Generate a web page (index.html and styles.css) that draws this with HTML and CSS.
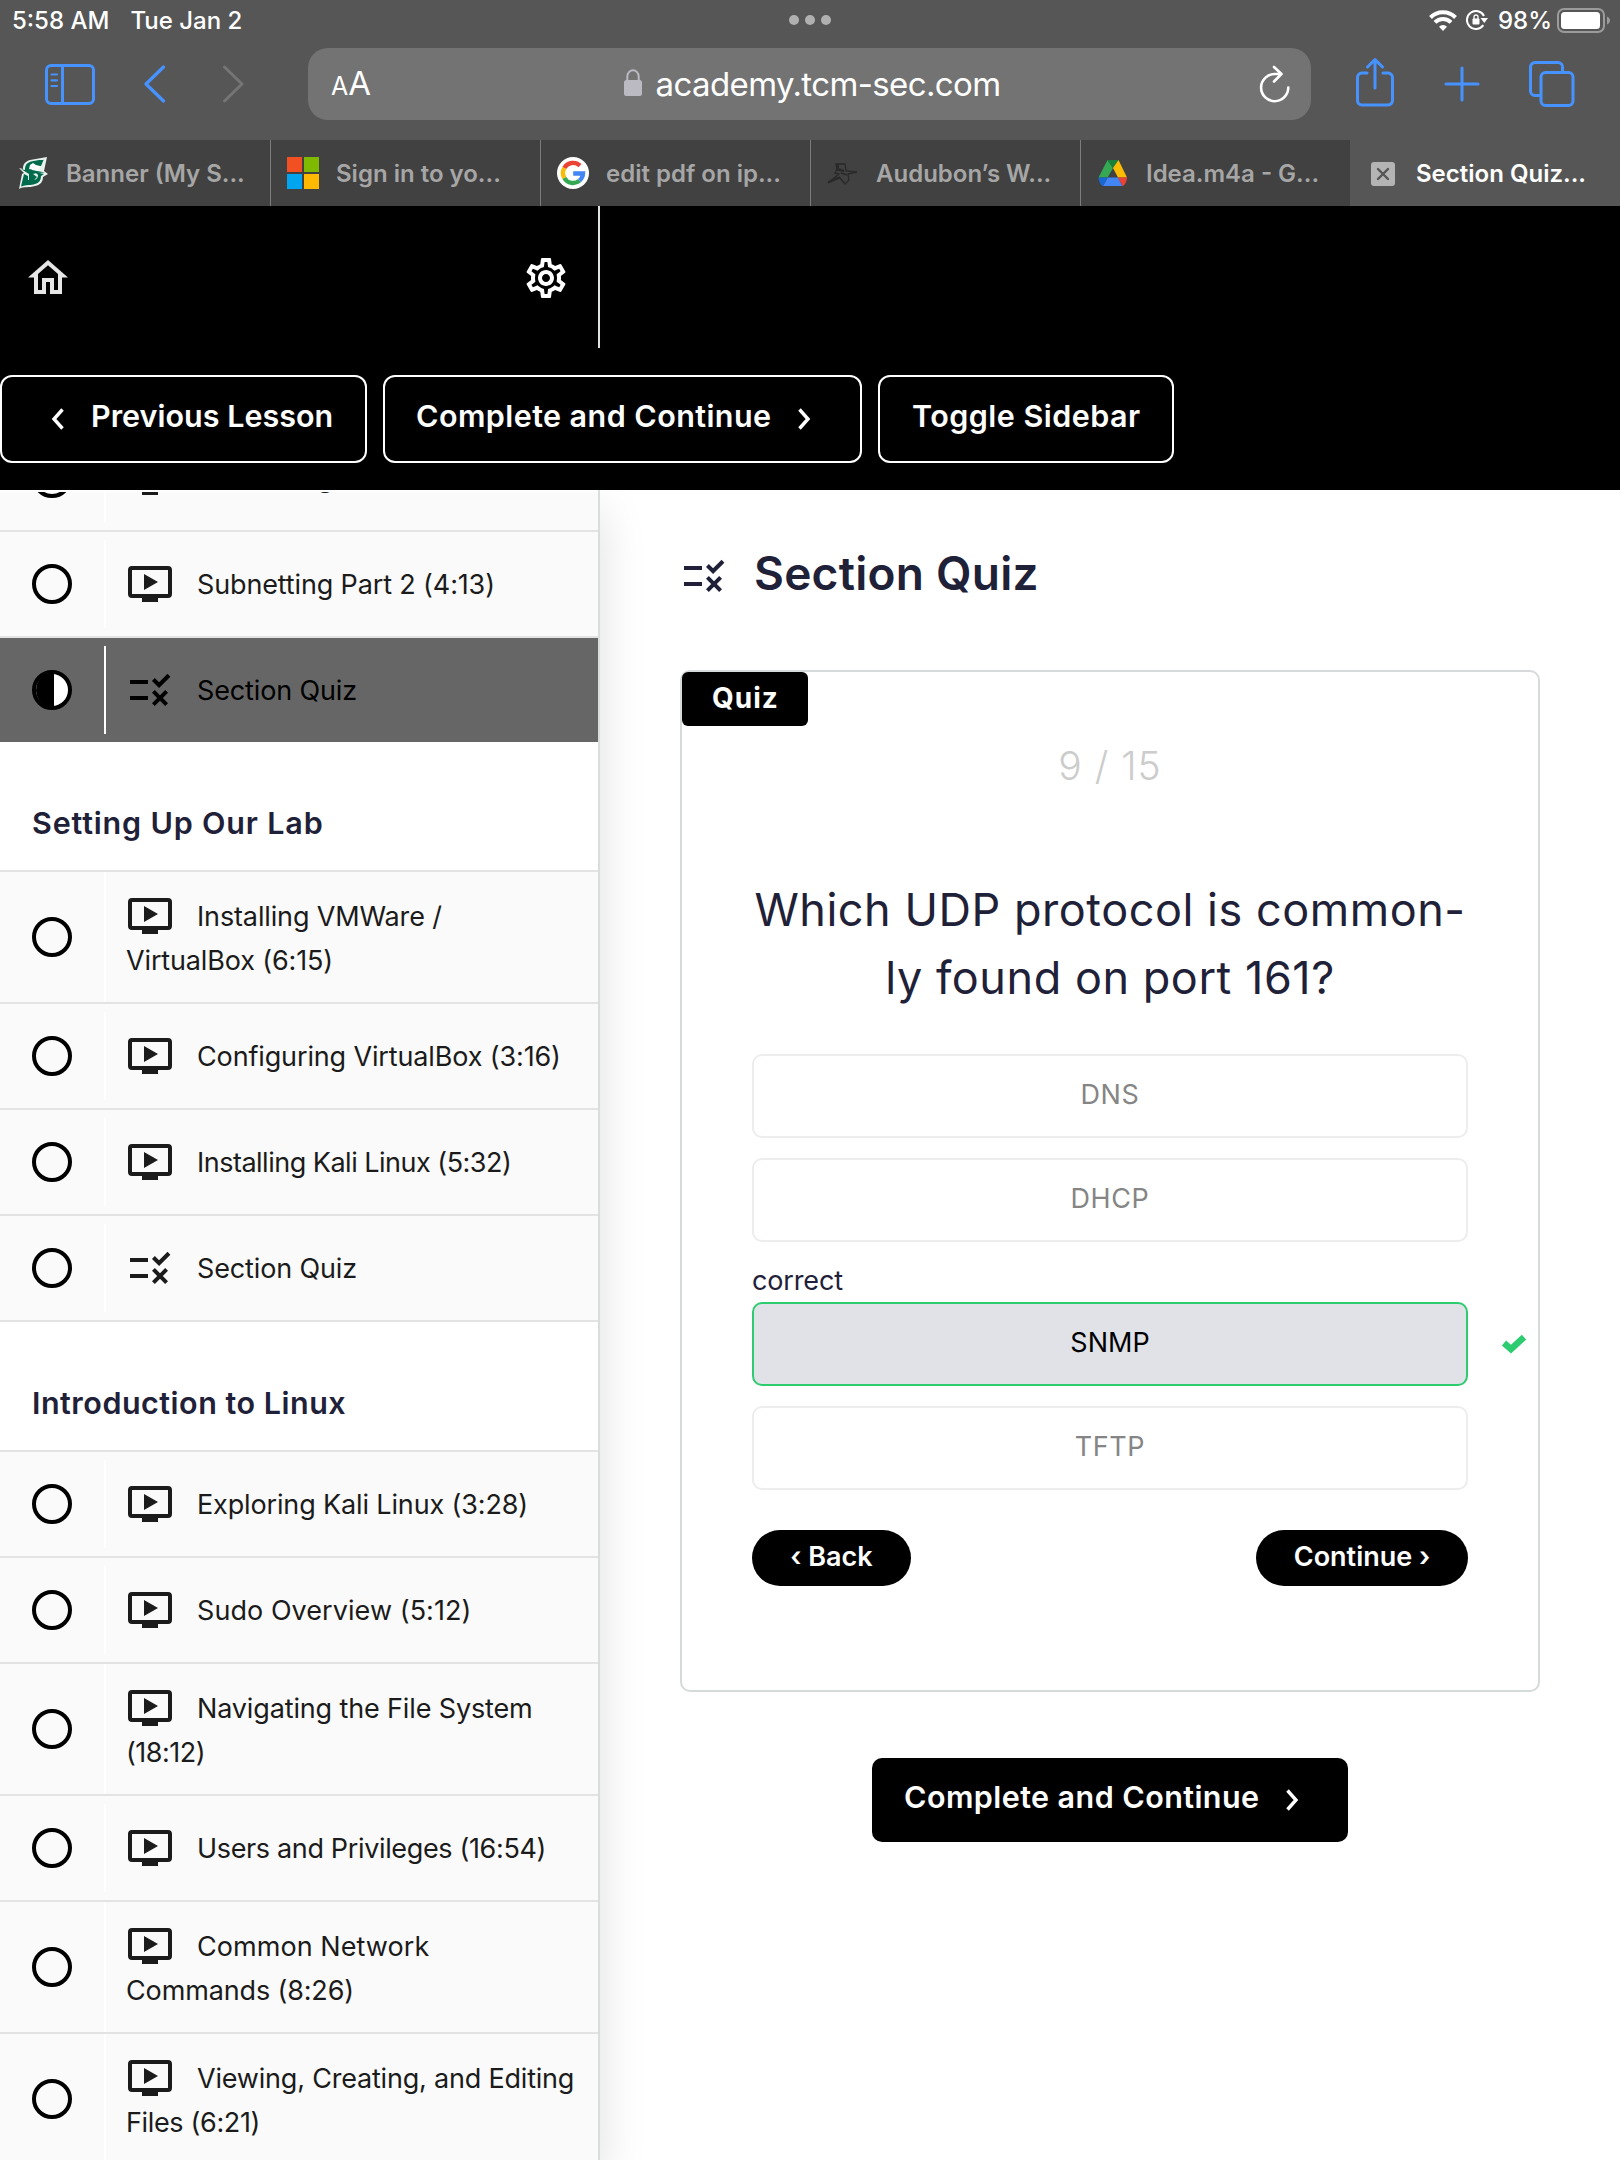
FILE: index.html
```html
<!DOCTYPE html>
<html lang="en">
<head>
<meta charset="utf-8">
<title>Section Quiz</title>
<link rel="stylesheet" href="styles.css">
</head>
<body>
<svg class="defs" aria-hidden="true">
  <symbol id="video" viewBox="0 0 46 36">
    <rect x="3" y="2" width="40" height="28" rx="2" fill="none" stroke="currentColor" stroke-width="4"/>
    <path d="M15 31h16v5H15zM17 8l14 8-14 8z" fill="currentColor"/>
  </symbol>
  <symbol id="rule" viewBox="0 3 24 18">
    <path fill="currentColor" d="M16.54 11L13 7.46l1.41-1.41 2.12 2.12 4.24-4.24 1.41 1.41L16.54 11zM11 7H2v2h9V7zm10 6.41L19.59 12 17 14.59 14.41 12 13 13.41 15.59 16 13 18.59 14.41 20 17 17.41 19.59 20 21 18.59 18.41 16 21 13.41zM11 15H2v2h9v-2z"/>
  </symbol>
  <symbol id="ring" viewBox="0 0 40 40"><circle cx="20" cy="20" r="18" fill="none" stroke="#000" stroke-width="4"/></symbol>
  <symbol id="left" viewBox="0 0 14 22"><path d="M11.5 1.5L3 11l8.500 9.500" fill="none" stroke="currentColor" stroke-width="3.400"/></symbol>
  <symbol id="right" viewBox="0 0 14 22"><path d="M2.500 1.500L11 11l-8.500 9.500" fill="none" stroke="currentColor" stroke-width="3.400"/></symbol>
</svg>

<header class="browser">
  <div class="status">
    <div class="status-left"><span>5:58 AM</span><span>Tue Jan 2</span></div>
    <div class="dots"><i></i><i></i><i></i></div>
    <div class="status-right">
      <svg width="28" height="21" viewBox="0 0 28 21" fill="none" stroke="#fff" stroke-width="4"><path d="M1.500 7.500a17.700 17.700 0 0 1 25 0"/><path d="M6 12.300a11.300 11.300 0 0 1 16 0"/><path d="M14 21l-4-4.200a5.600 5.600 0 0 1 8 0z" fill="#fff" stroke="none"/></svg>
      <svg class="lock-rot" width="22" height="20" viewBox="0 0 22 20"><path d="M18 6A9 9 0 1 0 17.300 15.200" fill="none" stroke="#fff" stroke-width="2"/><path d="M14.500 8h7.500l-3.700 5z" fill="#fff"/><rect x="6.500" y="8.500" width="7" height="6" rx="1" fill="#fff"/><path d="M8 9V7a2 2 0 0 1 4 0v2" fill="none" stroke="#fff" stroke-width="1.300"/></svg>
      <span>98%</span>
      <svg class="battery" width="54" height="25" viewBox="0 0 54 25"><rect x="1" y="1" width="46" height="23" rx="6" fill="none" stroke="#9b9b9b" stroke-width="2"/><rect x="4" y="4" width="39" height="17" rx="3.500" fill="#fff"/><path d="M50 8.500c4 1.500 4 6.500 0 8z" fill="#9b9b9b"/></svg>
    </div>
  </div>
  <div class="toolbar">
    <svg class="t-side" width="50" height="41" viewBox="0 0 50 41" fill="none" stroke="#4693ff" stroke-width="3"><rect x="1.500" y="1.500" width="47" height="38" rx="4.500"/><path d="M17.500 2v37"/><path d="M6.500 10.500H12M6.500 16.300H12M6.500 22H12" stroke-width="2.200" stroke-linecap="round"/></svg>
    <svg class="t-back" width="22" height="38" viewBox="0 0 22 38" fill="none" stroke="#4693ff" stroke-width="3.200" stroke-linecap="round" stroke-linejoin="round"><path d="M19.500 2L2 19l17.500 17"/></svg>
    <svg class="t-fwd" width="22" height="38" viewBox="0 0 22 38" fill="none" stroke="#757575" stroke-width="3" stroke-linecap="round" stroke-linejoin="round"><path d="M2.500 2L20 19 2.500 36"/></svg>
    <div class="url">
      <span class="aa"><small>A</small>A</span>
      <div class="host">
        <svg width="18" height="27" viewBox="0 0 18 27"><rect y="11" width="18" height="16" rx="2.500" fill="#bbb9c2"/><path d="M3.300 12V7.500a5.700 6.200 0 0 1 11.400 0V12" fill="none" stroke="#bbb9c2" stroke-width="2"/></svg>
        <span>academy.tcm-sec.com</span>
      </div>
      <svg class="reload" width="32" height="38" viewBox="0 0 32 38" fill="none" stroke="#fff" stroke-width="2.600" stroke-linecap="round" stroke-linejoin="round"><path d="M29.300 22.500A13.600 13.600 0 1 1 16 9h6.500M15 2l7.500 7-7.500 7.500"/></svg>
    </div>
    <svg class="t-share" width="38" height="50" viewBox="0 0 38 50" fill="none" stroke="#4693ff" stroke-width="3" stroke-linecap="round" stroke-linejoin="round"><path d="M11 16H6a4.500 4.500 0 0 0-4.500 4.500v23A4.500 4.500 0 0 0 6 48h26a4.500 4.500 0 0 0 4.500-4.500v-23A4.500 4.500 0 0 0 32 16h-5M19 31V2.500M11.500 10L19 2.500l7.500 7.500"/></svg>
    <svg class="t-plus" width="36" height="36" viewBox="0 0 36 36" fill="none" stroke="#4693ff" stroke-width="3" stroke-linecap="round"><path d="M18 2v32M2 18h32"/></svg>
    <svg class="t-tabs" width="46" height="46" viewBox="0 0 46 46" fill="none" stroke="#4693ff" stroke-width="3"><rect x="12" y="11.500" width="32" height="33" rx="4.500"/><path d="M12 34.500H6A4.500 4.500 0 0 1 1.500 30V6A4.500 4.500 0 0 1 6 1.500h23A4.500 4.500 0 0 1 33.500 6v5.500"/></svg>
  </div>
  <nav class="tabs">
    <div class="tab"><svg viewBox="0 0 32 32"><path d="M30 0L13 3C7 5 6 8 6 12l-4-1 5 5-2 1-3 15c5-3 10-1 16-3 6-1 8-5 8-9l5-3-4-3c1-5 2-9 3-14z" fill="#e9f1ed"/><path d="M27.500 2L14 4.500C9 6 8 9 8 13l-4-1 8 5v7h4l4-4-4-3 4-1 8-.5-13-2.500 1-4h8l3-7zM7 17l-3 12.500c5-2 10-1 14-2.500 4-1 6-4 6-8l3-2-9-2 3 3c0 4-3 5-5 5h-5v-4z" fill="#006b4c"/><path d="M13 8l3-2 3 2 4 1-1 5-10-2z" fill="#fff"/></svg><span>Banner (My S...</span></div>
    <div class="tab"><svg viewBox="0 0 32 32"><path fill="#f25022" d="M0 0h15v15H0z"/><path fill="#7fba00" d="M17 0h15v15H17z"/><path fill="#00a4ef" d="M0 17h15v15H0z"/><path fill="#ffb900" d="M17 17h15v15H17z"/></svg><span>Sign in to yo...</span></div>
    <div class="tab"><svg viewBox="0 0 32 32"><circle cx="16" cy="16" r="16" fill="#fff"/><g fill="none" stroke-width="4.400"><path d="M23 8.700A10 10 0 0 0 7.300 11" stroke="#ea4335"/><path d="M7.300 11a10 10 0 0 0 0 10" stroke="#fbbc05"/><path d="M7.300 21a10 10 0 0 0 15.200 2.600" stroke="#34a853"/><path d="M22.500 23.600A10 10 0 0 0 26 16.500H16.200" stroke="#4285f4"/></g></svg><span>edit pdf on ip...</span></div>
    <div class="tab"><svg viewBox="0 0 32 32" fill="none" stroke="#292929" stroke-width="1.300"><path d="M9 7h9l1 7 11 1-9 2 1 6-4 4-5-6-12 5 11-9-4-1 2-4z"/><path d="M12 12l5 2M1 25l12-5M14 16l6 2M11 8v5l6 1" stroke-width="1.800"/></svg><span>Audubon’s W...</span></div>
    <div class="tab"><svg viewBox="0 0 32 32"><path d="M10.500 3L1.500 20.500h9.200L16 11z" fill="#34a853"/><path d="M10.500 3h11L16 11z" fill="#188038"/><path d="M21.500 3l8.500 17.500h-9L16 11z" fill="#fbbc04"/><path d="M10.700 20.500H21l4.500 8.500H6z" fill="#4285f4"/><path d="M1.500 20.500h9.200L6 29c-2 0-4.500-5-4.500-8.500z" fill="#1967d2"/><path d="M30 20.500h-9l4.500 8.500c2 0 4.500-5 4.500-8.500z" fill="#ea4335"/></svg><span>Idea.m4a - G...</span></div>
    <div class="tab active"><svg viewBox="0 0 32 32"><rect x="4" y="5" width="24" height="24" rx="3" fill="#b4b4b4"/><path d="M11 12l10 10M21 12L11 22" stroke="#555" stroke-width="2.400" stroke-linecap="round"/></svg><span>Section Quiz...</span></div>
  </nav>
</header>

<header class="lesson-bar">
  <div class="course-tools">
    <svg width="40" height="34" viewBox="0 0 40 34"><path fill="#e6e6e6" fill-rule="evenodd" d="M20 0l20 17.500h-6V34H22V22h-4v12H6V17.500H0zM20 5.300L10 14v16h4V18h12v12h4V14z"/></svg>
    <svg width="48" height="48" viewBox="0 0 24 24"><path fill="#fff" d="M19.430 12.980c.04-.32.07-.64.07-.98s-.03-.66-.07-.98l2.110-1.650c.19-.15.24-.42.12-.64l-2-3.460c-.09-.16-.26-.25-.44-.25-.06 0-.12.010-.17.030l-2.490 1c-.52-.4-1.080-.73-1.690-.98l-.38-2.650C14.460 2.180 14.250 2 14 2h-4c-.25 0-.46.180-.49.420l-.38 2.650c-.61.250-1.170.590-1.690.980l-2.490-1c-.06-.02-.12-.03-.18-.03-.17 0-.34.090-.43.250l-2 3.460c-.13.220-.07.490.120.640l2.110 1.650c-.04.320-.07.650-.07.980s.03.660.070.980l-2.110 1.650c-.19.150-.24.420-.12.640l2 3.460c.09.160.260.250.440.250.06 0 .12-.01.170-.03l2.490-1c.52.4 1.080.730 1.690.980l.38 2.650c.03.240.240.420.490.420h4c.25 0 .46-.18.490-.42l.38-2.650c.61-.25 1.170-.59 1.690-.98l2.490 1c.06.020.120.030.180.030.17 0 .34-.09.430-.25l2-3.460c.12-.22.070-.49-.12-.64l-2.110-1.650zm-1.980-1.710c.04.310.050.520.050.730 0 .21-.02.430-.05.730l-.14 1.130.89.700 1.080.840-.7 1.210-1.270-.51-1.040-.42-.9.680c-.43.320-.84.560-1.250.730l-1.060.43-.16 1.130-.2 1.350h-1.400l-.19-1.350-.16-1.130-1.060-.43c-.43-.18-.83-.41-1.230-.71l-.91-.7-1.060.43-1.270.51-.7-1.210 1.080-.84.89-.7-.14-1.130c-.03-.31-.05-.54-.05-.74s.02-.43.050-.73l.14-1.130-.89-.7-1.080-.84.7-1.210 1.270.51 1.040.42.9-.68c.43-.32.84-.56 1.250-.73l1.060-.43.160-1.130.2-1.350h1.390l.19 1.350.16 1.130 1.060.43c.43.180.830.410 1.230.710l.91.7 1.060-.43 1.270-.51.7 1.210-1.070.85-.89.700.14 1.130zM12 8c-2.210 0-4 1.790-4 4s1.790 4 4 4 4-1.790 4-4-1.790-4-4-4zm0 6c-1.100 0-2-.9-2-2s.9-2 2-2 2 .9 2 2-.9 2-2 2z"/></svg>
  </div>
  <div class="lesson-nav">
    <a class="nav-btn prev"><svg><use href="#left"/></svg><span>Previous Lesson</span></a>
    <a class="nav-btn complete"><span>Complete and Continue</span><svg><use href="#right"/></svg></a>
    <a class="nav-btn toggle"><span>Toggle Sidebar</span></a>
  </div>
</header>

<div class="content">
  <aside class="sidebar">
    <div class="list">
      <a class="row"><span class="mark"><svg><use href="#ring"/></svg></span><span class="name"><svg class="video"><use href="#video"/></svg>Subnetting Part 1 (25:57)</span></a>
      <a class="row"><span class="mark"><svg><use href="#ring"/></svg></span><span class="name"><svg class="video"><use href="#video"/></svg>Subnetting Part 2 (4:13)</span></a>
      <a class="row current"><span class="mark"><svg viewBox="0 0 40 40"><circle cx="20" cy="20" r="18" fill="#fff" stroke="#000" stroke-width="4"/><path d="M22 2a18 18 0 1 0 0 36z"/></svg></span><span class="name"><svg class="rule"><use href="#rule"/></svg>Section Quiz</span></a>

      <h2 class="lab">Setting Up Our Lab</h2>
      <a class="row tall"><span class="mark"><svg><use href="#ring"/></svg></span><span class="name"><svg class="video"><use href="#video"/></svg>Installing VMWare /<br>VirtualBox (6:15)</span></a>
      <a class="row"><span class="mark"><svg><use href="#ring"/></svg></span><span class="name"><svg class="video"><use href="#video"/></svg>Configuring VirtualBox (3:16)</span></a>
      <a class="row"><span class="mark"><svg><use href="#ring"/></svg></span><span class="name tight"><svg class="video"><use href="#video"/></svg>Installing Kali Linux (5:32)</span></a>
      <a class="row last"><span class="mark"><svg><use href="#ring"/></svg></span><span class="name"><svg class="rule"><use href="#rule"/></svg>Section Quiz</span></a>

      <h2>Introduction to Linux</h2>
      <a class="row"><span class="mark"><svg><use href="#ring"/></svg></span><span class="name"><svg class="video"><use href="#video"/></svg>Exploring Kali Linux (3:28)</span></a>
      <a class="row"><span class="mark"><svg><use href="#ring"/></svg></span><span class="name loose"><svg class="video"><use href="#video"/></svg>Sudo Overview (5:12)</span></a>
      <a class="row tall"><span class="mark"><svg><use href="#ring"/></svg></span><span class="name"><svg class="video"><use href="#video"/></svg>Navigating the File System<br><span class="tight">(18:12)</span></span></a>
      <a class="row"><span class="mark"><svg><use href="#ring"/></svg></span><span class="name snug"><svg class="video"><use href="#video"/></svg>Users and Privileges (16:54)</span></a>
      <a class="row tall"><span class="mark"><svg><use href="#ring"/></svg></span><span class="name"><svg class="video"><use href="#video"/></svg><span class="loose">Common Network</span><br>Commands (8:26)</span></a>
      <a class="row tall"><span class="mark"><svg><use href="#ring"/></svg></span><span class="name"><svg class="video"><use href="#video"/></svg><span class="snug-s">Viewing, Creating, and Editing</span><br><span class="snug">Files (6:21)</span></span></a>
    </div>
  </aside>

  <main class="main">
    <h1><svg><use href="#rule"/></svg><span>Section Quiz</span></h1>
    <section class="quiz">
      <div class="badge">Quiz</div>
      <div class="counter">9 / 15</div>
      <p class="question">Which UDP protocol is common-<br><span>ly found on port 161?</span></p>
      <div class="option">DNS</div>
      <div class="option">DHCP</div>
      <div class="verdict">correct</div>
      <div class="option right">SNMP<svg class="check" width="24" height="18" viewBox="0 0 24 18"><path d="M2 8l7 6.200L22 2.200" fill="none" stroke="#2ecc71" stroke-width="6.500"/></svg></div>
      <div class="option">TFTP</div>
      <div class="pager"><a class="back">‹ Back</a><a class="next">Continue ›</a></div>
    </section>
    <a class="finish"><span>Complete and Continue</span><svg><use href="#right"/></svg></a>
  </main>
</div>
</body>
</html>
```
FILE: styles.css
```css
* { box-sizing: border-box; }
body { margin: 0; width: 1620px; height: 2160px; overflow: hidden; background: #fff; font-family: Inter, "Liberation Sans", sans-serif; display: flex; flex-direction: column; }
svg { display: block; flex: none; }
.defs { display: none; }
h1, h2, p { margin: 0; }

/* Browser chrome */
.browser { height: 206px; flex: none; background: #565656; color: #fff; }
.status { height: 40px; display: grid; grid-template-columns: 1fr auto 1fr; align-items: center; font-size: 24px; font-weight: 500; }
.status-left { display: flex; gap: 21px; padding-left: 12px; }
.dots { display: flex; gap: 6px; }
.dots i { width: 10px; height: 10px; border-radius: 50%; background: #b0b0b0; }
.status-right { display: flex; justify-content: flex-end; align-items: center; padding-right: 9px; }
.lock-rot { margin: 0 10px 0 9px; }
.battery { margin-left: 5px; }
.toolbar { height: 100px; display: flex; align-items: center; padding: 0 45px 12px; }
.t-back { margin-left: 49px; }
.t-fwd { margin: 0 64px 0 56px; }
.url { width: 1003px; height: 72px; border-radius: 20px; background: #737373; display: flex; align-items: center; padding: 0 20px 0 23px; }
.aa { font-size: 33px; width: 50px; line-height: 40px; }
.aa small { font-size: 25px; }
.host { flex: 1; display: flex; align-items: center; justify-content: center; gap: 14px; font-size: 33px; letter-spacing: -.62px; padding-right: 16px; }
.host svg { margin-top: -3px; }
.t-share { margin: -4px 0 0 45px; }
.t-plus { margin-left: 50px; }
.t-tabs { margin-left: 49px; }
.tabs { height: 66px; display: flex; }
.tab { width: 270px; display: flex; align-items: center; gap: 18px; padding-left: 16px; background: #414141; border-left: 1px solid #7c7c7c; color: #a6a6a6; font-size: 24px; font-weight: 600; white-space: nowrap; padding-bottom: 1px; }
.tab:first-child { border-left-color: #414141; }
.tab span { padding-top: 1px; margin-left: -1px; }
.tab svg { width: 32px; height: 32px; }
.tab.active { background: #565656; border-left-color: #565656; color: #fff; }

/* Lesson header */
.lesson-bar { height: 284px; flex: none; background: #000; color: #fff; }
.course-tools { width: 600px; height: 142px; border-right: 2px solid #dde2e2; display: flex; justify-content: space-between; align-items: center; padding: 0 28px; }
.course-tools svg:last-child { margin-top: 2px; }
.lesson-nav { display: flex; gap: 16px; padding-top: 27px; }
.nav-btn { height: 88px; border: 2px solid #fff; border-radius: 12px; display: flex; align-items: center; padding-bottom: 8px; font-size: 30.5px; font-weight: 600; white-space: nowrap; }
.nav-btn svg, .finish svg { width: 14px; height: 22px; margin-top: 8px; }
.prev { width: 367px; padding-left: 49px; gap: 26px; letter-spacing: 0; }
.complete { width: 479px; padding-left: 31px; gap: 25px; letter-spacing: .43px; }
.toggle { width: 296px; padding-left: 32px; letter-spacing: .46px; }

.content { flex: 1; min-height: 0; display: flex; }

/* Course outline */
.sidebar { width: 600px; flex: none; height: 1670px; border-right: 2px solid #d8dddd; box-shadow: 0 20px 44px rgba(0, 0, 0, .13); padding-top: 2px; background: #fff; position: relative; clip-path: inset(0 -60px 0 0); }
.list { height: 100%; overflow: hidden; }
.row { display: flex; height: 106px; border-top: 2px solid #e3e3e3; background: #fafafa; color: #1b1b1b; font-size: 27px; line-height: 44px; letter-spacing: -.14px; }
.row:first-child { margin-top: -68px; }
.mark { width: 106px; flex: none; margin: 8px 0; border-right: 2px solid #fff; display: flex; align-items: center; padding-left: 32px; }
.mark svg { width: 40px; height: 40px; }
.name { padding: 31px 0 0 20px; white-space: nowrap; }
.row:first-child .name { padding-top: 30px; }
.name svg { display: inline-block; vertical-align: -8px; height: 36px; }
.tight { letter-spacing: -.5px; }
.snug { letter-spacing: -.35px; }
.snug-s { letter-spacing: -.2px; }
.loose { letter-spacing: .06px; }
.video { width: 46px; margin: 0 24px 0 1px; }
.rule { width: 48px; margin: 0 23px 0 0; }
.row.tall { height: 132px; }
.row.tall .mark { margin: 0; }
.row.tall .name { padding-top: 23px; }
.row.last { height: 108px; border-bottom: 2px solid #e3e3e3; }
.row.current { background: #666; color: #000; }
h2 { height: 128px; padding: 59px 0 0 32px; color: #1f2138; font-size: 30.5px; line-height: 44px; font-weight: 600; letter-spacing: .5px; }
h2.lab { letter-spacing: .82px; }

/* Lesson body */
.main { flex: 1; padding: 53px 80px 0; color: #1f2138; display: flex; flex-direction: column; }
h1 { height: 60px; display: flex; align-items: center; gap: 26px; font-size: 46px; font-weight: 600; letter-spacing: .25px; }
h1 svg { width: 48px; height: 36px; margin-top: 6px; }
.quiz { margin-top: 67px; height: 1022px; border: 2px solid #d5dada; border-radius: 10px; padding: 0 70px; font-size: 27px; text-align: center; }
.badge { width: 126px; height: 54px; margin-left: -70px; border-radius: 6px; background: #000; color: #fff; font-size: 28px; font-weight: 700; letter-spacing: 1px; line-height: 53px; padding-left: 1px; }
.counter { margin-top: 16px; color: #ccc; font-size: 39px; font-weight: 300; line-height: 48px; letter-spacing: 1px; }
.question { margin: 86px 0 42px; font-size: 45px; line-height: 68px; letter-spacing: .54px; white-space: nowrap; }
.option { height: 84px; margin-bottom: 20px; border: 2px solid #ededed; border-radius: 10px; color: #858585; line-height: 77px; letter-spacing: .6px; }
.option.right { position: relative; border-color: #2ecc71; background: #e1e2e8; color: #000; letter-spacing: 0; }
.check { position: absolute; right: -60px; top: 31px; overflow: visible; }
.verdict { margin-top: -2px; height: 42px; line-height: 42px; text-align: left; letter-spacing: -.15px; }
.pager { display: flex; justify-content: space-between; padding-top: 20px; }
.pager a { height: 56px; border-radius: 28px; background: #000; color: #fff; font-weight: 600; line-height: 54px; }
.back { width: 159px; }
.next { width: 212px; }
.finish { align-self: center; width: 476px; height: 84px; margin-top: 66px; border-radius: 10px; background: #000; color: #fff; display: flex; align-items: center; gap: 25px; padding: 0 0 8px 32px; font-size: 30.5px; font-weight: 600; letter-spacing: .43px; white-space: nowrap; }
```
